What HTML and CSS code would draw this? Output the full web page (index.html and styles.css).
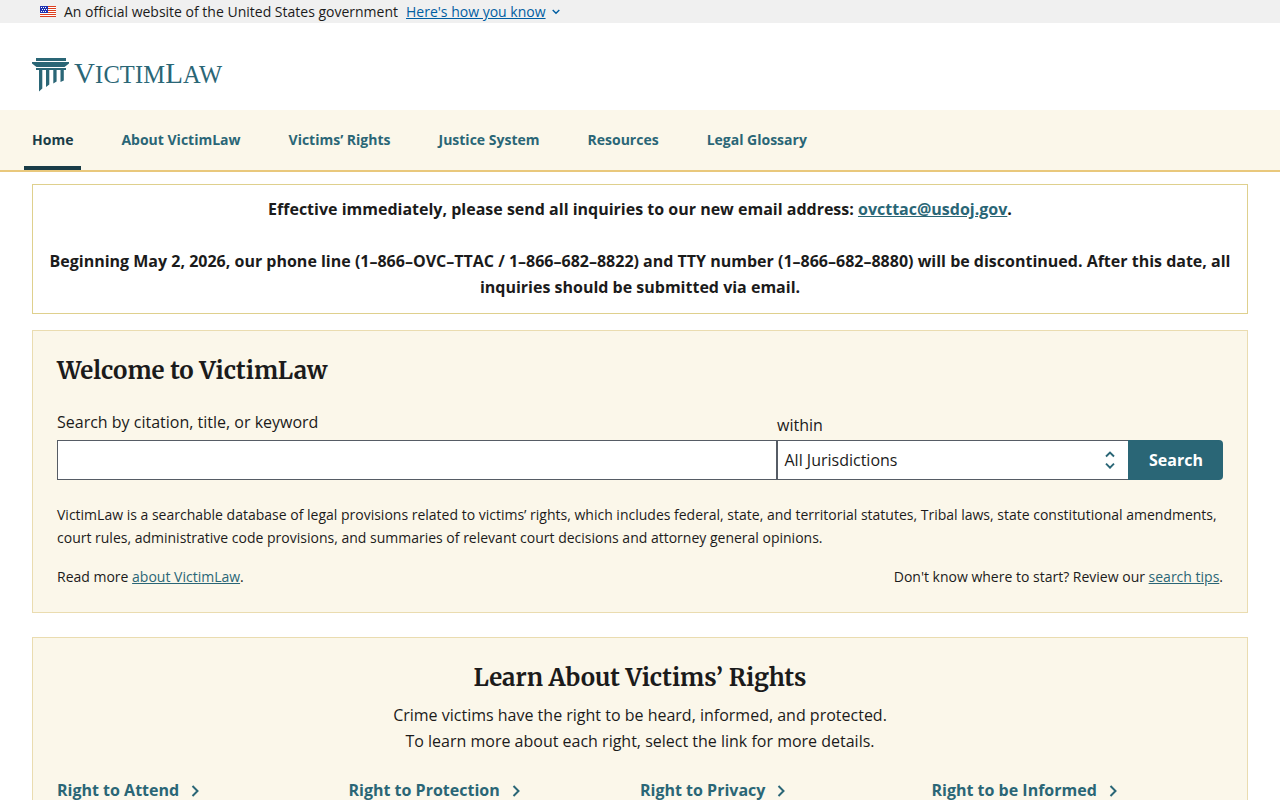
FILE: index.html
```html
<!DOCTYPE html>
<html lang="en">
<head>
    <meta charset="utf-8">
    <title>VictimLaw</title>
    <link rel="stylesheet" href="styles.css">
</head>
<body>
    <div class="banner">
        <svg class="flag" width="16" height="11" viewBox="0 0 16 11">
            <rect width="16" height="11" fill="#fff"/>
            <path d="M0 .5h16M0 2.5h16M0 4.5h16M0 6.5h16M0 8.5h16M0 10.5h16" stroke="#db3e1f"/>
            <rect width="8" height="7" fill="#1e33b1"/>
            <path d="M1 1.5h1M3 1.5h1M5 1.5h1M2 3.5h1M4 3.5h1M6 3.5h1M1 5.5h1M3 5.5h1M5 5.5h1" stroke="#fff"/>
        </svg>
        <span>An official website of the United States government</span>
        <a href="#" class="banner-link">Here's how you know</a>
        <svg class="banner-arrow" width="8" height="6" viewBox="0 0 8 6">
            <path d="M.7 1 4 4.3 7.3 1" fill="none" stroke="#005ea2" stroke-width="1.4"/>
        </svg>
    </div>

    <header class="header">
        <a href="#" class="logo">
            <svg width="192" height="36" viewBox="0 0 192 36">
                <g fill="#2a6676">
                    <path d="M4 1h30v3H4z"/>
                    <path d="M0 5h37v1.500l-4.500 3.500h-28L0 6.500z"/>
                    <path d="M4 11h30v2H4z"/>
                    <path d="M7 13h3.300v18.500l-3.300 3zM14 13h3.300v14.500l-3.300 2.500zM21.300 13h3.300v11.500l-3.300 2zM28.500 13h3.300v10.500l-3.300 1.500z"/>
                </g>
                <text class="logo-text" x="42" y="25.500" textLength="148"><tspan class="logo-cap">V</tspan>ICTIM<tspan class="logo-cap">L</tspan>AW</text>
            </svg>
        </a>
    </header>

    <nav class="nav">
        <a href="#" class="nav-link current">Home</a>
        <a href="#" class="nav-link">About VictimLaw</a>
        <a href="#" class="nav-link">Victims’ Rights</a>
        <a href="#" class="nav-link">Justice System</a>
        <a href="#" class="nav-link">Resources</a>
        <a href="#" class="nav-link">Legal Glossary</a>
    </nav>

    <main class="main">
        <div class="notice">
            <p>Effective immediately, please send all inquiries to our new email address: <a href="#">ovcttac@usdoj.gov</a>.</p>
            <p>Beginning May 2, 2026, our phone line (1–866–OVC–TTAC / 1–866–682–8822) and TTY number (1–866–682–8880) will be discontinued. After this date, all inquiries should be submitted via email.</p>
        </div>

        <section class="card search-card">
            <h1 class="heading">Welcome to VictimLaw</h1>
            <form class="search">
                <div class="field keyword">
                    <label for="keyword">Search by citation, title, or keyword</label>
                    <input id="keyword" class="input" type="text">
                </div>
                <div class="field within">
                    <label for="within">within</label>
                    <div id="within" class="input select">
                        <span>All Jurisdictions</span>
                        <svg width="10" height="18" viewBox="0 0 10 18">
                            <path d="M1 5.500 5 1.500l4 4M1 12.700l4 4 4-4" fill="none" stroke="#2a6676" stroke-width="1.900"/>
                        </svg>
                    </div>
                </div>
                <button type="button" class="search-button">Search</button>
            </form>
            <p class="about">VictimLaw is a searchable database of legal provisions related to victims’ rights, which includes federal, state, and territorial statutes, Tribal laws, state constitutional amendments, court rules, administrative code provisions, and summaries of relevant court decisions and attorney general opinions.</p>
            <div class="more">
                <span>Read more <a href="#">about VictimLaw</a>.</span>
                <span>Don't know where to start? Review our <a href="#">search tips</a>.</span>
            </div>
        </section>

        <section class="card rights-card">
            <h2 class="heading">Learn About Victims’ Rights</h2>
            <p class="intro">Crime victims have the right to be heard, informed, and protected.<br>To learn more about each right, select the link for more details.</p>
            <div class="rights">
                <a href="#" class="right">Right to Attend
                    <svg width="8" height="12" viewBox="0 0 8 12"><path d="m1.500 1 5 5-5 5"/></svg>
                </a>
                <a href="#" class="right">Right to Protection
                    <svg width="8" height="12" viewBox="0 0 8 12"><path d="m1.500 1 5 5-5 5"/></svg>
                </a>
                <a href="#" class="right">Right to Privacy
                    <svg width="8" height="12" viewBox="0 0 8 12"><path d="m1.500 1 5 5-5 5"/></svg>
                </a>
                <a href="#" class="right">Right to be Informed
                    <svg width="8" height="12" viewBox="0 0 8 12"><path d="m1.500 1 5 5-5 5"/></svg>
                </a>
            </div>
        </section>
    </main>
</body>
</html>
```
FILE: styles.css
```css
*{
    box-sizing: border-box;
}

body{
    margin: 0;
    height: 800px;
    overflow: hidden;
    background-color: white;
    color: #1b1b1b;
    font-family: "Open Sans", sans-serif;
    font-size: 16px;
    line-height: 26px;
}

a{
    color: #2a6676;
}

p{
    margin: 0;
}

.banner{
    display: flex;
    align-items: center;
    height: 23px;
    padding-left: 40px;
    background-color: #f0f0f0;
    font-size: 14px;
    line-height: 23px;
}

.flag{
    margin-right: 8px;
}

.banner-link{
    margin-left: 8px;
    color: #005ea2;
}

.banner-arrow{
    margin-left: 6px;
}

.header{
    height: 87px;
    padding: 34px 32px 0;
}

.logo svg{
    display: block;
}

.logo-text{
    fill: #2a6676;
    font-family: "Liberation Serif", serif;
    font-size: 24.5px;
}

.logo-cap{
    font-size: 29px;
}

.nav{
    display: flex;
    gap: 32px;
    height: 62px;
    padding-left: 24px;
    background-color: #fbf7ea;
    border-bottom: 2px solid #e9c87c;
}

.nav-link{
    height: 60px;
    padding: 0 8px;
    font-size: 14px;
    font-weight: bold;
    line-height: 60px;
    text-decoration: none;
}

.nav-link.current{
    color: #193c47;
    border-bottom: 4px solid #193c47;
}

.main{
    padding: 12px 32px 0;
}

.notice{
    height: 130px;
    padding: 11px 16px;
    border: 1px solid #dfd08d;
    font-weight: bold;
    text-align: center;
}

.notice p + p{
    margin-top: 26px;
}

.card{
    padding: 0 24px;
    background-color: #fbf7ea;
    border: 1px solid #eadcb0;
}

.heading{
    margin: 0;
    font-family: Merriweather, "DejaVu Serif", serif;
    font-size: 24px;
    line-height: 32px;
}

.search-card{
    height: 283px;
    margin-top: 16px;
    padding-top: 24px;
}

.search{
    display: flex;
    align-items: flex-end;
    margin-top: 22px;
}

.field{
    display: flex;
    flex-direction: column;
}

.keyword{
    width: 720px;
    gap: 5px;
}

.within{
    width: 351px;
    gap: 2px;
}

.input{
    height: 40px;
    padding: 0 8px;
    background-color: white;
    border: 1px solid #565c65;
    border-radius: 0;
}

.select{
    display: flex;
    align-items: center;
    justify-content: space-between;
    padding: 0 13px 0 6.5px;
    border-right: 0;
}

.search-button{
    width: 95px;
    height: 40px;
    padding: 0 0 0 1px;
    border: 0;
    border-radius: 0 4px 4px 0;
    background-color: #2a6676;
    color: white;
    font-family: inherit;
    font-size: 16px;
    font-weight: bold;
}

.about{
    margin-top: 23px;
    font-size: 14px;
    line-height: 23px;
}

.more{
    display: flex;
    justify-content: space-between;
    margin-top: 16px;
    font-size: 14px;
    line-height: 23px;
}

.rights-card{
    margin-top: 24px;
    padding-top: 24px;
    padding-bottom: 24px;
}

.rights-card .heading{
    text-align: center;
}

.intro{
    margin-top: 8px;
    text-align: center;
}

.rights{
    display: grid;
    grid-template-columns: repeat(4, 1fr);
    margin-top: 23px;
}

.right{
    display: flex;
    align-items: center;
    gap: 12px;
    font-weight: bold;
    text-decoration: none;
}

.right svg{
    margin-top: 2px;
}

.right path{
    fill: none;
    stroke: #2a6676;
    stroke-width: 2;
}
```
